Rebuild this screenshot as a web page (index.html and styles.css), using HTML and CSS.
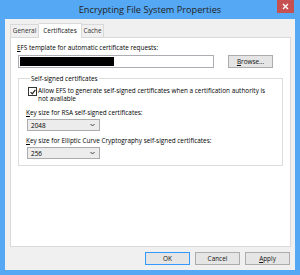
FILE: index.html
```html
<!doctype html>
<html>
<head>
<meta charset="utf-8">
<title>Encrypting File System Properties</title>
<link rel="stylesheet" href="styles.css">
</head>
<body>
<div class="window">
  <div class="titlebar">
    <span class="title">Encrypting File System Properties</span>
    <div class="close">
      <svg width="7" height="7" viewBox="0 0 7 7"><path d="M1 1L6 6M6 1L1 6" stroke="#fff" stroke-width="1.4"/></svg>
    </div>
  </div>
  <div class="client">
    <ul class="tabs">
      <li class="tab">General</li>
      <li class="tab active">Certificates</li>
      <li class="tab">Cache</li>
    </ul>
    <div class="panel">
      <p class="label"><u>E</u>FS template for automatic certificate requests:</p>
      <div class="row">
        <div class="textbox"><div class="redact"></div></div>
        <div class="btn browse"><u>B</u>rowse...</div>
      </div>
      <fieldset class="group">
        <legend>Self-signed certificates</legend>
        <div class="check">
          <div class="box">
            <svg width="6" height="6" viewBox="0 0 6 6"><path d="M0.6 3.1L2.3 4.8L5.4 0.9" fill="none" stroke="#222" stroke-width="1.2"/></svg>
          </div>
          <span>Allow EFS to generate self-signed certificates when a certification authority is not available</span>
        </div>
        <p class="label key"><u>K</u>ey size for RSA self-signed certificates:</p>
        <div class="combo"><span>2048</span>
          <svg width="5" height="4" viewBox="0 0 5 4"><path d="M0.5 1L2.5 3L4.5 1" fill="none" stroke="#444" stroke-width="1"/></svg>
        </div>
        <p class="label key"><u>K</u>ey size for Elliptic Curve Cryptography self-signed certificates:</p>
        <div class="combo"><span>256</span>
          <svg width="5" height="4" viewBox="0 0 5 4"><path d="M0.5 1L2.5 3L4.5 1" fill="none" stroke="#444" stroke-width="1"/></svg>
        </div>
      </fieldset>
    </div>
    <div class="buttons">
      <div class="btn default">OK</div>
      <div class="btn">Cancel</div>
      <div class="btn"><u>A</u>pply</div>
    </div>
  </div>
</div>
</body>
</html>
```

FILE: styles.css
```css
*{margin:0;padding:0;box-sizing:border-box}
body{font-family:"Open Sans","Noto Sans",sans-serif;font-size:6.4px;color:#000;}
u{text-decoration:underline;}

.window{width:300px;height:275px;background:#55a8f4;padding:0 5px 5px 5px;display:flex;flex-direction:column;}
.titlebar{height:19px;position:relative;display:flex;justify-content:center;align-items:center;}
.title{font-size:9.2px;color:#222;padding-bottom:1px;}
.close{position:absolute;right:1px;top:0;width:17px;height:13px;background:#c75050;display:flex;align-items:center;justify-content:center;}

.client{flex:1;background:#f0f0f0;padding:4px 4px 0 5px;display:flex;flex-direction:column;}
.tabs{display:flex;list-style:none;height:14px;align-items:flex-end;position:relative;z-index:1;}
.tab{height:13px;line-height:12px;text-align:center;white-space:nowrap;border:1px solid #d9d9d9;border-bottom:none;background:#f0f0f0;color:#333;}
.tab:first-child{width:29px;}
.tab.active{height:15px;width:43px;background:#fff;margin-bottom:-1px;line-height:13px;border-left:none;color:#111;}
.tab:last-child{width:22px;border-left:none;}

.panel{height:210px;background:#fff;border:1px solid #d9d9d9;padding:5px 6px 0 6px;}
.label{line-height:9px;height:9px;}
.row{display:flex;align-items:center;margin-top:3px;}
.textbox{width:196px;height:13px;border:1px solid #abadb3;background:#fff;padding:1px;margin-left:1px;}
.redact{width:94px;height:100%;background:#000;}
.btn{width:45px;height:13px;border:1px solid #acacac;background:#e5e5e5;text-align:center;line-height:11px;color:#111;}
.browse{margin-left:14px;}

.group{margin-top:6px;width:265px;height:92px;border:1px solid #dcdcdc;padding:0 0 0 7px;margin-left:1px;}
.group legend{margin-left:4px;padding:0 1px;line-height:9px;}
.check{display:flex;align-items:flex-start;margin-top:3px;margin-left:2px;}
.box{width:9px;height:9px;border:1px solid #333;background:#fff;display:flex;align-items:center;justify-content:center;flex:none;margin-top:1px;}
.check span{margin-left:1px;line-height:8px;width:236px;padding-top:1px;}
.key{margin-top:5px;}
.combo{width:73px;height:12px;border:1px solid #acacac;background:#ececec;margin-top:2px;margin-left:1px;display:flex;align-items:center;justify-content:space-between;padding:0 4px 0 3px;}

.buttons{display:flex;justify-content:flex-end;gap:5px;padding:5px 1px 0 0;}
.buttons .btn{height:13px;}
.btn.default{border-color:#3399ff;}
```
